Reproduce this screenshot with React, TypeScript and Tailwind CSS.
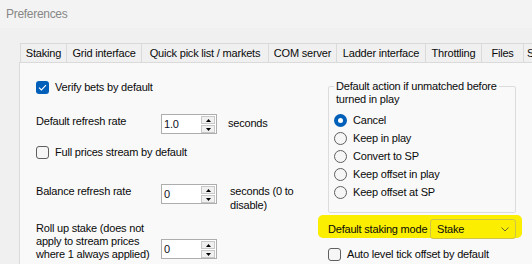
import React from "react";

const tabs = [
  { label: "Staking", w: "w-[47px]" },
  { label: "Grid interface", w: "w-[75px]" },
  { label: "Quick pick list / markets", w: "w-[127px]" },
  { label: "COM server", w: "w-[68px]" },
  { label: "Ladder interface", w: "w-[89px]" },
  { label: "Throttling", w: "w-[56px]" },
  { label: "Files", w: "w-[42px]" },
];

const radios = ["Cancel", "Keep in play", "Convert to SP", "Keep offset in play", "Keep offset at SP"];

const CheckBox = ({ checked }: { checked?: boolean }) =>
  checked ? (
    <div className="w-[13px] h-[13px] shrink-0 rounded-[3px] bg-[#005fb8] flex items-center justify-center">
      <svg width="9" height="7" viewBox="0 0 9 7">
        <path d="M1 3.6 L3.4 6 L8 1.2" fill="none" stroke="white" strokeWidth="1.1" />
      </svg>
    </div>
  ) : (
    <div className="w-[13px] h-[13px] shrink-0 rounded-[3px] border border-[#5f5f5f] bg-[#f6f6f6]" />
  );

const Radio = ({ checked }: { checked?: boolean }) =>
  checked ? (
    <div className="w-[13px] h-[13px] shrink-0 rounded-full bg-[#005fb8] flex items-center justify-center">
      <div className="w-[5px] h-[5px] rounded-full bg-white" />
    </div>
  ) : (
    <div className="w-[13px] h-[13px] shrink-0 rounded-full border border-[#5f5f5f] bg-[#f6f6f6]" />
  );

const Spin = ({ value }: { value: string }) => (
  <div className="w-[56px] h-[20px] shrink-0 border border-[#adadad] bg-white flex justify-between">
    <span className="pl-[2px] leading-[18px] text-[#101020]">{value}</span>
    <div className="flex flex-col gap-[1px] pt-[1px] pr-[1px]">
      <div className="w-[14px] h-[8px] border border-[#c8c8c8] bg-[#f0f0f0] flex items-center justify-center">
        <svg width="5" height="3" viewBox="0 0 5 3"><path d="M0 3 L2.5 0 L5 3 Z" fill="#000" /></svg>
      </div>
      <div className="w-[14px] h-[8px] border border-[#c8c8c8] bg-[#f0f0f0] flex items-center justify-center">
        <svg width="5" height="3" viewBox="0 0 5 3"><path d="M0 0 L2.5 3 L5 0 Z" fill="#000" /></svg>
      </div>
    </div>
  </div>
);

export default function App() {
  return (
    <div className="w-[532px] h-[264px] overflow-hidden bg-[#f0f0f0] font-['Liberation_Sans',Arial,sans-serif] text-[11px] tracking-[-0.2px] text-[#0a0a0a]">
      <div className="h-[28px] bg-[#f3f3f3] flex items-center pl-[6px] text-[12px] tracking-[-0.3px] text-[#878787]">
        Preferences
      </div>
      <div className="pl-[20px] pt-[15px]">
        <div className="flex h-[19px]">
          {tabs.map((t, i) => (
            <div
              key={t.label}
              className={`${t.w} shrink-0 h-[19px] flex items-center justify-center whitespace-nowrap overflow-hidden border-t border-r border-[#dadada] bg-[#f0f0f0] ${i === 0 ? "border-l" : ""}`}
            >
              {t.label}
            </div>
          ))}
          <div className="w-[8px] shrink-0 h-[19px] pl-[3px] border-t border-[#dadada] bg-[#f0f0f0] leading-[18px] overflow-hidden">
            S
          </div>
        </div>
        <div className="-ml-[1px] w-[600px] h-[220px] border border-[#dadada] bg-[#f9f9f9] flex">
          {/* left column */}
          <div className="w-[308px] shrink-0 pl-[16px]">
            <div className="mt-[18px] h-[13px] flex items-center gap-[6px]">
              <CheckBox checked />
              <span>Verify bets by default</span>
            </div>
            <div className="mt-[20px] h-[20px] flex items-start">
              <span className="w-[125px] leading-[14px]">Default refresh rate</span>
              <Spin value="1.0" />
              <span className="ml-[11px] leading-[18px]">seconds</span>
            </div>
            <div className="mt-[12px] h-[13px] flex items-center gap-[6px]">
              <CheckBox />
              <span>Full prices stream by default</span>
            </div>
            <div className="mt-[25px] h-[20px] flex items-start">
              <span className="w-[125px] leading-[14px]">Balance refresh rate</span>
              <Spin value="0" />
              <span className="ml-[13px] leading-[14px]">
                seconds (0 to
                <br />
                disable)
              </span>
            </div>
            <div className="mt-[18px] flex items-start">
              <span className="w-[125px] leading-[13px]">
                Roll up stake (does not
                <br />
                apply to stream prices
                <br />
                where 1 always applied)
              </span>
              <div className="mt-[17px]">
                <Spin value="0" />
              </div>
            </div>
          </div>
          {/* right column */}
          <div className="w-[188px] shrink-0">
            <div className="mt-[23px] h-[127px] border border-[#dcdcdc] rounded-[2px]">
              <div className="-mt-[7px] ml-[5px] px-[2px] w-fit bg-[#f9f9f9] leading-[13px]">
                Default action if unmatched before
                <br />
                turned in play
              </div>
              <div className="mt-[5px] pl-[5px]">
                {radios.map((r, i) => (
                  <div key={r} className="h-[18px] flex items-center gap-[6px]">
                    <Radio checked={i === 0} />
                    <span>{r}</span>
                  </div>
                ))}
              </div>
            </div>
            <div className="mt-[2px] -ml-[10px] w-[204px] h-[23px] rounded-[5px] bg-[#fbee00] flex items-start pt-[4px] pl-[10px]">
              <span className="w-[102px] leading-[20px]">Default staking mode</span>
              <div className="w-[86px] h-[20px] border border-[#cfc44a] rounded-[3px] flex items-center justify-between pl-[6px] pr-[6px]">
                <span>Stake</span>
                <svg width="8" height="5" viewBox="0 0 8 5">
                  <path d="M0.5 0.5 L4 4 L7.5 0.5" fill="none" stroke="#6a6a30" strokeWidth="1" />
                </svg>
              </div>
            </div>
            <div className="mt-[10px] h-[13px] flex items-center gap-[6px]">
              <CheckBox />
              <span>Auto level tick offset by default</span>
            </div>
          </div>
        </div>
      </div>
    </div>
  );
}
